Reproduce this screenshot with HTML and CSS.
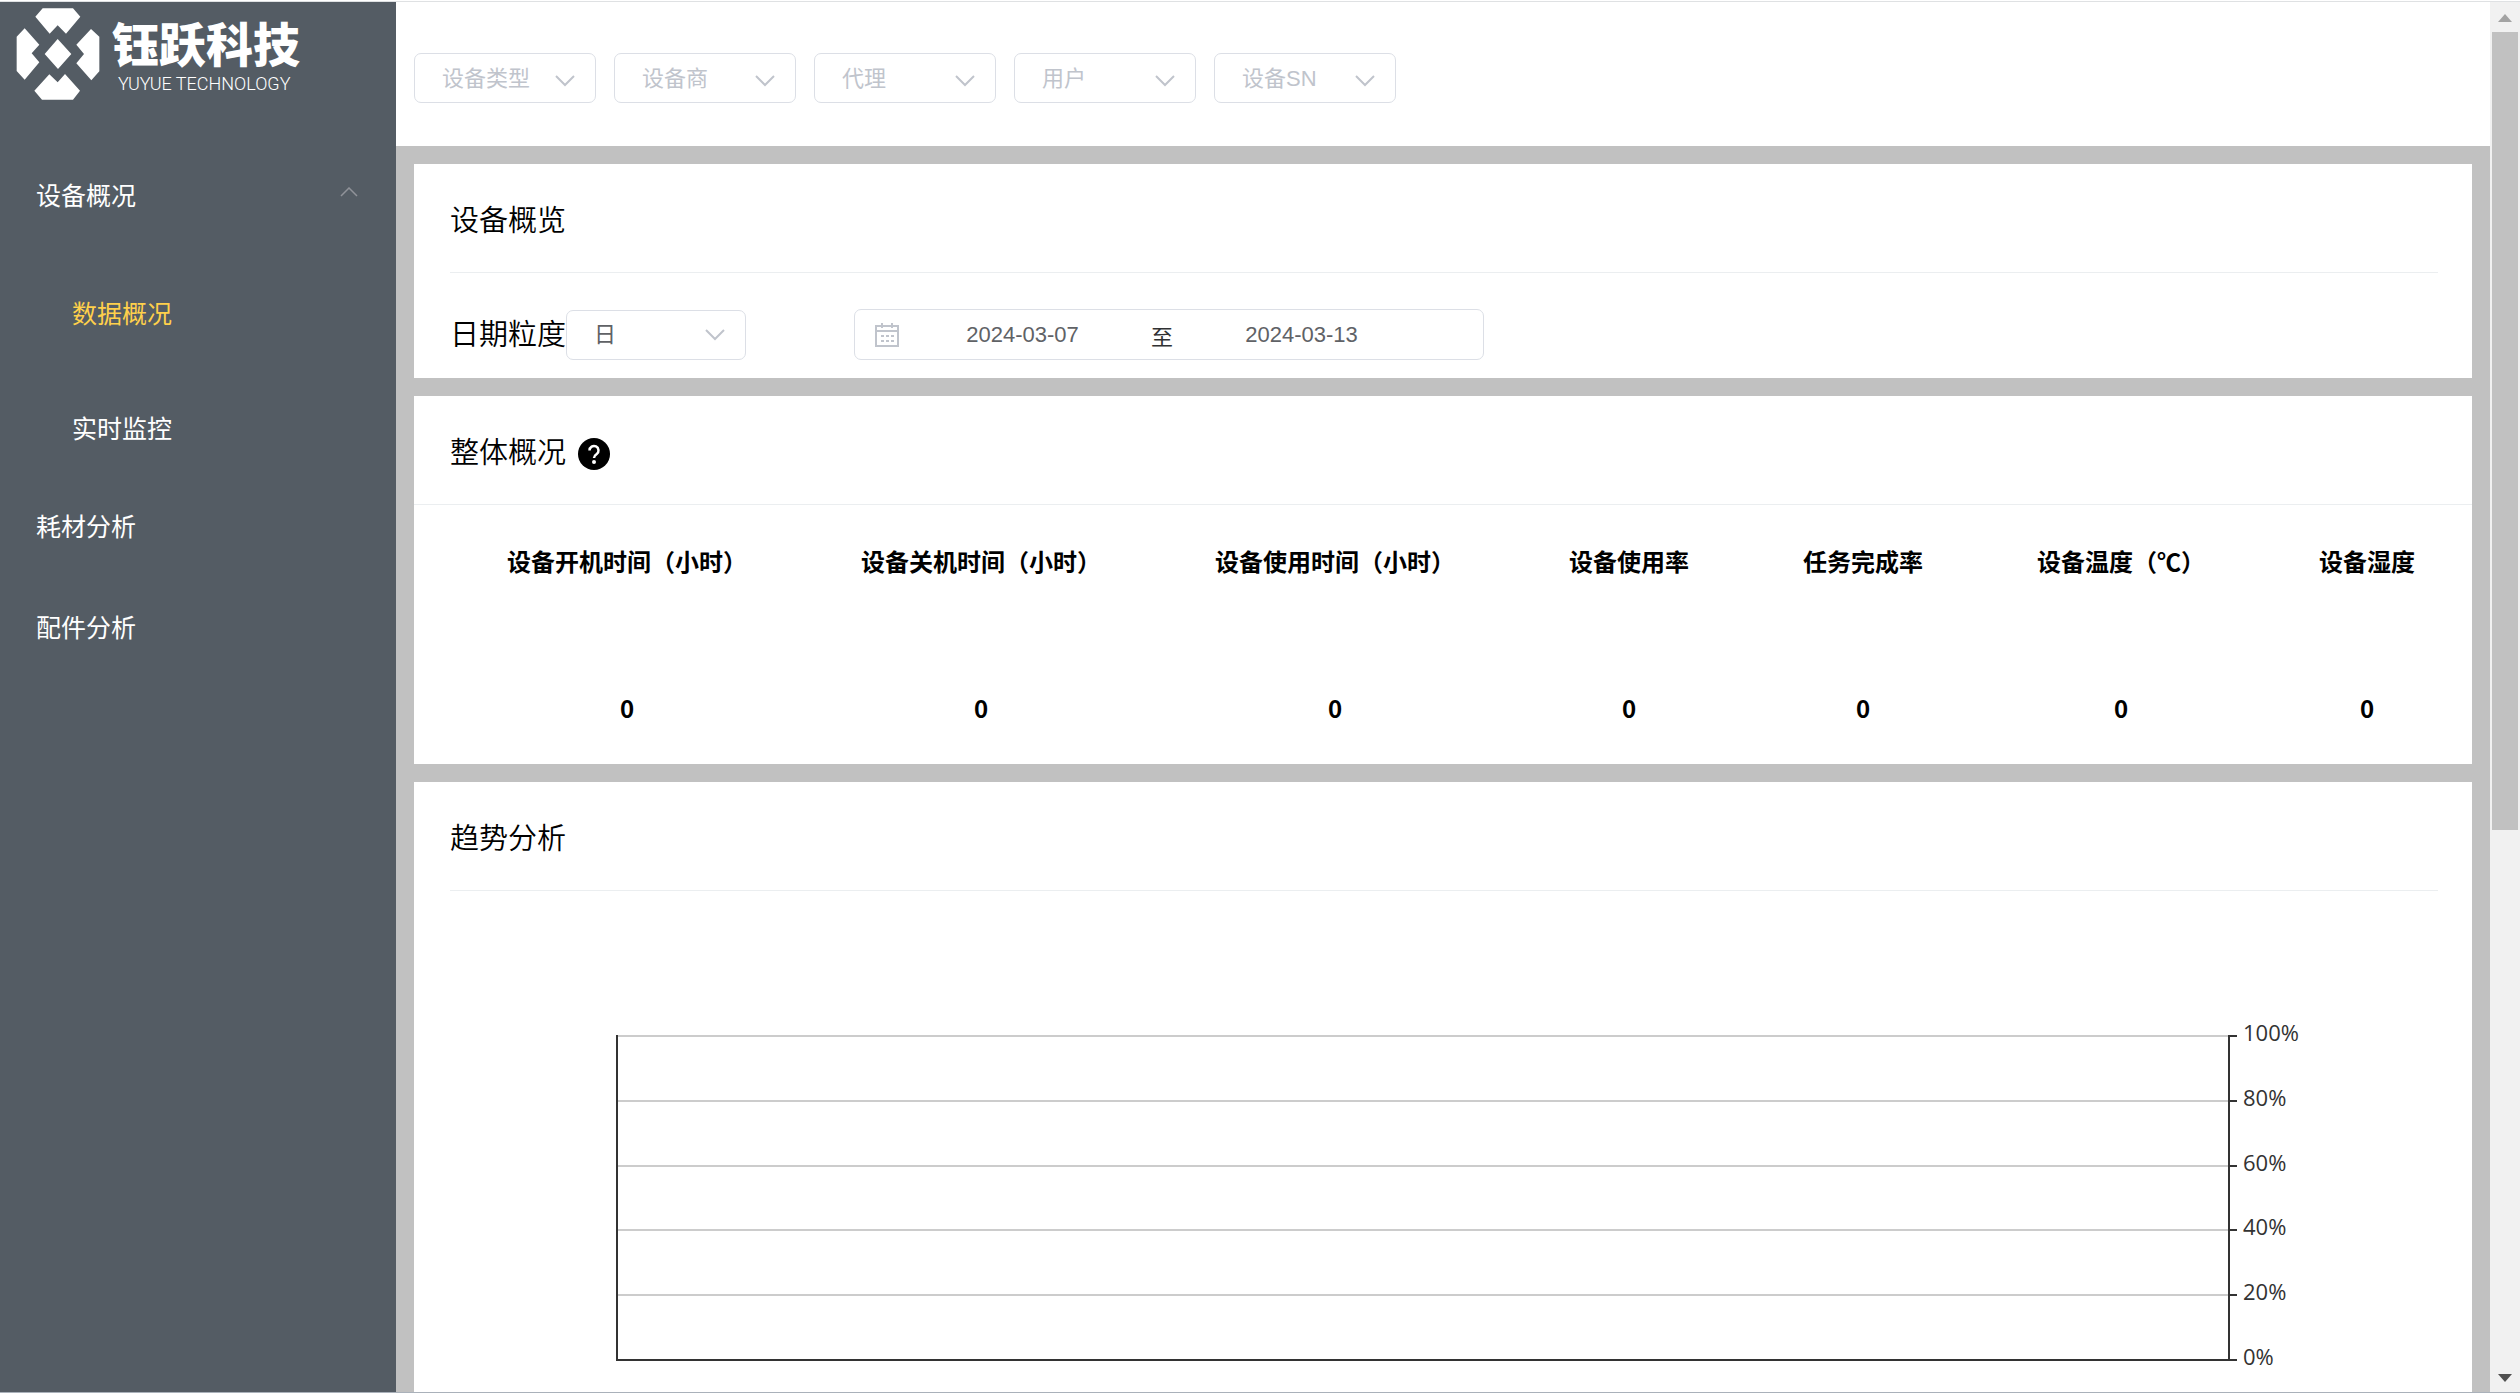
FILE: index.html
```html
<!DOCTYPE html>
<html lang="zh-CN">
<head>
<meta charset="utf-8">
<title>钰跃科技 - 数据概况</title>
<link rel="stylesheet" href="styles.css">
</head>
<body>
<div class="app">
  <aside class="sidebar">
    <a class="brand" href="#">
      <svg class="brand-mark" viewBox="51 24 250 276" aria-hidden="true">
        <path d="M108 50 130 25H221L243 50 200 101 175 76 151 101ZM52 110 76 85 120 134 97 160 120 187 76 239 52 213ZM300 110 275 87 231 134 254 162 231 190 276 241 300 214ZM105 272 150 223 175 247 197 222 242 272 221 299H128ZM175 117 216 162 176 207 136 162Z"/>
      </svg>
      <span class="brand-text">
        <strong class="brand-name">钰跃科技</strong>
        <span class="brand-sub">YUYUE TECHNOLOGY</span>
      </span>
    </a>
    <nav class="menu">
      <button class="menu-item" type="button" aria-expanded="true">
        设备概况
        <svg class="menu-arrow" viewBox="0 0 18 10" aria-hidden="true"><path d="M1 9 9 1 17 9"/></svg>
      </button>
      <div class="submenu">
        <a class="submenu-item active" href="#">数据概况</a>
        <a class="submenu-item" href="#">实时监控</a>
      </div>
      <a class="menu-item" href="#">耗材分析</a>
      <a class="menu-item" href="#">配件分析</a>
    </nav>
  </aside>

  <main class="main">
    <form class="filters">
      <div class="select"><select aria-label="设备类型"><option>设备类型</option></select><svg class="chevron" viewBox="0 0 20 12" aria-hidden="true"><path d="M1 1 10 10 19 1"/></svg></div>
      <div class="select"><select aria-label="设备商"><option>设备商</option></select><svg class="chevron" viewBox="0 0 20 12" aria-hidden="true"><path d="M1 1 10 10 19 1"/></svg></div>
      <div class="select"><select aria-label="代理"><option>代理</option></select><svg class="chevron" viewBox="0 0 20 12" aria-hidden="true"><path d="M1 1 10 10 19 1"/></svg></div>
      <div class="select"><select aria-label="用户"><option>用户</option></select><svg class="chevron" viewBox="0 0 20 12" aria-hidden="true"><path d="M1 1 10 10 19 1"/></svg></div>
      <div class="select"><select aria-label="设备SN"><option>设备SN</option></select><svg class="chevron" viewBox="0 0 20 12" aria-hidden="true"><path d="M1 1 10 10 19 1"/></svg></div>
    </form>

    <div class="content">
      <section class="card">
        <h2 class="card-title inset">设备概览</h2>
        <div class="date-row">
          <label class="date-label" for="grain">日期粒度</label>
          <div class="select chosen"><select id="grain"><option>日</option></select><svg class="chevron" viewBox="0 0 20 12" aria-hidden="true"><path d="M1 1 10 10 19 1"/></svg></div>
          <div class="range">
            <svg class="calendar" viewBox="0 0 24 24" aria-hidden="true">
              <path d="M1 3H23V23H1ZM1 8H23M7 0V5M17 0V5"/>
              <path d="M6 13H9M11 13H14M16 13H19M6 18H9M11 18H14M16 18H19"/>
            </svg>
            <input class="range-input" type="text" value="2024-03-07" aria-label="开始日期">
            <span class="range-sep">至</span>
            <input class="range-input" type="text" value="2024-03-13" aria-label="结束日期">
          </div>
        </div>
      </section>

      <section class="card">
        <h2 class="card-title full">整体概况
          <svg class="help" viewBox="0 0 32 32" role="img" aria-label="说明">
            <circle cx="16" cy="16" r="16"/>
            <path d="M11.500 12.500a4.500 4.500 0 1 1 7.200 3.600c-1.700 1.200-2.700 2-2.700 4"/>
            <circle class="help-dot" cx="16" cy="24" r="2"/>
          </svg>
        </h2>
        <div class="stats-wrap">
          <table class="stats">
            <thead>
              <tr><th>设备开机时间（小时）</th><th>设备关机时间（小时）</th><th>设备使用时间（小时）</th><th>设备使用率</th><th>任务完成率</th><th>设备温度（℃）</th><th>设备湿度</th></tr>
            </thead>
            <tbody>
              <tr><td>0</td><td>0</td><td>0</td><td>0</td><td>0</td><td>0</td><td>0</td></tr>
            </tbody>
          </table>
        </div>
      </section>

      <section class="card">
        <h2 class="card-title inset">趋势分析</h2>
        <div class="chart">
          <div class="plot"><i></i><i></i><i></i><i></i><i></i></div>
          <ul class="axis">
            <li><span>100%</span></li>
            <li><span>80%</span></li>
            <li><span>60%</span></li>
            <li><span>40%</span></li>
            <li><span>20%</span></li>
            <li><span>0%</span></li>
          </ul>
        </div>
      </section>
    </div>
  </main>

  <div class="scrollbar" aria-hidden="true">
    <svg class="scroll-arrow up" viewBox="0 0 14 8"><path d="M0 8 7 0 14 8Z"/></svg>
    <div class="scroll-track"><div class="scroll-thumb"></div></div>
    <svg class="scroll-arrow" viewBox="0 0 14 8"><path d="M0 0 7 8 14 0Z"/></svg>
  </div>
</div>
</body>
</html>
```

FILE: styles.css
```css
* {
  box-sizing: border-box;
}

body {
  margin: 0;
  padding-top: 1px;
  height: 100vh;
  overflow: hidden;
  background: #fff;
  color: #000;
  font-family: "Liberation Sans", "Noto Sans CJK SC", sans-serif;
  font-size: 22px;
}

a {
  color: inherit;
  text-decoration: none;
}

.app {
  display: flex;
  height: 100%;
  border-top: 1px solid #dfe1e3;
  border-bottom: 1px solid #aab1ba;
}

/* Sidebar */
.sidebar {
  flex: 0 0 396px;
  background: #545c64;
  color: #fff;
}

.brand {
  display: flex;
  height: 143px;
  padding: 6px 16px;
  gap: 12px;
}

.brand-mark {
  width: 84px;
  height: 92px;
  fill: #fff;
}

.brand-text {
  display: flex;
  flex-direction: column;
  padding-top: 11px;
}

.brand-name {
  font: 900 47px/54px "Liberation Sans", "Noto Sans CJK SC", sans-serif;
}

.brand-sub {
  padding-left: 6px;
  font: 300 18px/22px Roboto, sans-serif;
}

.menu {
  display: flex;
  flex-direction: column;
}

.menu-item,
.submenu-item {
  display: flex;
  align-items: center;
  justify-content: space-between;
  height: 101px;
  padding: 0 36px 4px;
  border: 0;
  background: none;
  color: #fff;
  font: 400 25px/36px "Noto Sans CJK SC", sans-serif;
}

.menu-arrow {
  width: 18px;
  height: 10px;
  margin: 0 2px 4px 0;
  fill: none;
  stroke: #909399;
  stroke-width: 1.500;
}

.submenu {
  display: flex;
  flex-direction: column;
  gap: 25px;
  padding: 23px 0 2px;
}

.submenu-item {
  height: 90px;
  padding: 0 72px 4px;
}

.submenu-item.active {
  color: #ffd04b;
}

/* Filters */
.main {
  flex: 1;
  display: flex;
  flex-direction: column;
  min-width: 0;
  overflow: hidden;
}

.filters {
  display: flex;
  flex: 0 0 144px;
  align-items: flex-start;
  gap: 18px;
  padding: 51px 18px 0;
}

.select {
  display: grid;
  align-items: center;
  width: 182px;
  height: 50px;
}

.select select,
.chevron {
  grid-area: 1 / 1;
}

.select select {
  width: 100%;
  height: 100%;
  padding: 0 27px;
  border: 1px solid #dcdfe6;
  border-radius: 7px;
  appearance: none;
  background: #fff;
  color: #c0c4cc;
  font: inherit;
}

.select.chosen {
  width: 180px;
}

.select.chosen select {
  color: #606266;
}

.chevron {
  justify-self: end;
  width: 20px;
  height: 12px;
  margin: 6px 21px 0 0;
  fill: none;
  stroke: #c0c4cc;
  stroke-width: 2;
  pointer-events: none;
}

.chosen .chevron {
  margin-top: 0;
}

/* Cards */
.content {
  display: flex;
  flex: 1;
  flex-direction: column;
  gap: 18px;
  min-height: 0;
  padding: 18px;
  background: #c1c1c1;
}

.card {
  flex: none;
  background: #fff;
}

.card-title {
  display: flex;
  align-items: center;
  gap: 12px;
  height: 109px;
  margin: 0;
  border-bottom: 1px solid #ebeef0;
  font-size: 29px;
  font-weight: 350;
}

.card-title.inset {
  margin: 0 34px 0 36px;
}

.card-title.full {
  padding: 0 36px;
}

.help {
  width: 32px;
  height: 32px;
  margin-top: 8px;
}

.help path {
  fill: none;
  stroke: #fff;
  stroke-width: 2.500;
}

.help-dot {
  fill: #fff;
}

.date-row {
  display: flex;
  align-items: center;
  padding: 36px 36px 18px;
}

.date-label {
  font-size: 29px;
  line-height: 36px;
  font-weight: 350;
}

.range {
  display: flex;
  align-items: center;
  width: 630px;
  height: 51px;
  margin-left: 108px;
  padding-left: 20px;
  border: 1px solid #dcdfe6;
  border-radius: 7px;
}

.calendar {
  width: 24px;
  height: 24px;
  fill: none;
  stroke: #c0c4cc;
  stroke-width: 2;
}

.range-input {
  width: 247px;
  height: 40px;
  padding: 0;
  border: 0;
  background: none;
  color: #606266;
  font: inherit;
  text-align: center;
}

.range-sep {
  width: 32px;
  color: #303133;
  text-align: center;
}

.stats-wrap {
  padding-left: 36px;
}

.stats {
  width: 100%;
  border-collapse: collapse;
  font-family: "Noto Sans CJK SC", sans-serif;
  font-size: 24px;
  font-weight: 700;
  line-height: 36px;
  text-align: center;
  white-space: nowrap;
}

.stats th {
  padding: 38px 57px 40px;
}

.stats td {
  padding: 71px 0 38px;
}

/* Chart */
.chart {
  display: flex;
  height: 354px;
  margin: 130px 142px 60px 202px;
}

.plot {
  display: flex;
  flex: 1;
  flex-direction: column;
  margin: 14px 0;
  border: solid #333;
  border-width: 0 2px 2px;
}

.plot i {
  flex: 1;
  border-top: 2px solid #ccc;
}

.axis {
  display: flex;
  flex-direction: column;
  justify-content: space-between;
  width: 100px;
  margin: 0;
  padding: 0;
  list-style: none;
  color: #333;
  font: 400 22px/26px "Open Sans", sans-serif;
}

.axis li {
  display: flex;
  align-items: center;
  gap: 6px;
  height: 30px;
}

.axis li::before {
  width: 7px;
  height: 2px;
  background: #333;
  content: "";
}

.axis span {
  padding-bottom: 8px;
}

/* Scrollbar */
.scrollbar {
  display: flex;
  flex: 0 0 30px;
  flex-direction: column;
  align-items: center;
  padding: 12px 2px 10px;
  background: #f1f1f1;
}

.scroll-arrow {
  flex: none;
  width: 14px;
  height: 8px;
  fill: #505050;
}

.scroll-arrow.up {
  fill: #a3a3a3;
}

.scroll-track {
  flex: 1;
  align-self: stretch;
  margin: 10px 0 12px;
}

.scroll-thumb {
  height: 60%;
  background: #c1c1c1;
}
```
